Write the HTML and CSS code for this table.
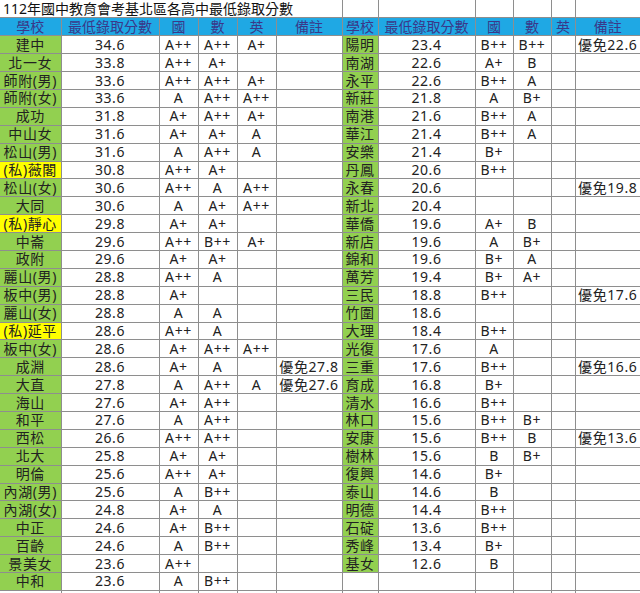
FILE: index.html
```html
<!DOCTYPE html>
<html lang="zh-Hant">
<head>
<meta charset="utf-8">
<title>112年國中教育會考基北區各高中最低錄取分數</title>
<link rel="stylesheet" href="styles.css">
</head>
<body>
<table class="sheet">
<colgroup>
<col class="c-sch"><col class="c-score"><col class="c-g"><col class="c-g"><col class="c-g"><col class="c-note">
<col class="c-sch2"><col class="c-score2"><col class="c-g2"><col class="c-g2"><col class="c-en2"><col class="c-note2">
</colgroup>
<tr class="title-row"><td class="title" colspan="6">112年國中教育會考基北區各高中最低錄取分數</td><td></td><td></td><td></td><td></td><td></td><td></td></tr>
<tr class="head"><td>學校</td><td>最低錄取分數</td><td>國</td><td>數</td><td>英</td><td>備註</td><td>學校</td><td>最低錄取分數</td><td>國</td><td>數</td><td>英</td><td>備註</td></tr>
<tr><td class="sch">建中</td><td>34.6</td><td>A++</td><td>A++</td><td>A+</td><td></td><td class="sch">陽明</td><td>23.4</td><td>B++</td><td>B++</td><td></td><td>優免22.6</td></tr>
<tr><td class="sch">北一女</td><td>33.8</td><td>A++</td><td>A+</td><td></td><td></td><td class="sch">南湖</td><td>22.6</td><td>A+</td><td>B</td><td></td><td></td></tr>
<tr><td class="sch">師附(男)</td><td>33.6</td><td>A++</td><td>A++</td><td>A+</td><td></td><td class="sch">永平</td><td>22.6</td><td>B++</td><td>A</td><td></td><td></td></tr>
<tr><td class="sch">師附(女)</td><td>33.6</td><td>A</td><td>A++</td><td>A++</td><td></td><td class="sch">新莊</td><td>21.8</td><td>A</td><td>B+</td><td></td><td></td></tr>
<tr><td class="sch">成功</td><td>31.8</td><td>A+</td><td>A++</td><td>A+</td><td></td><td class="sch">南港</td><td>21.6</td><td>B++</td><td>A</td><td></td><td></td></tr>
<tr><td class="sch">中山女</td><td>31.6</td><td>A+</td><td>A+</td><td>A</td><td></td><td class="sch">華江</td><td>21.4</td><td>B++</td><td>A</td><td></td><td></td></tr>
<tr><td class="sch">松山(男)</td><td>31.6</td><td>A</td><td>A++</td><td>A</td><td></td><td class="sch">安樂</td><td>21.4</td><td>B+</td><td></td><td></td><td></td></tr>
<tr><td class="sch priv">(私)薇閣</td><td>30.8</td><td>A++</td><td>A+</td><td></td><td></td><td class="sch">丹鳳</td><td>20.6</td><td>B++</td><td></td><td></td><td></td></tr>
<tr><td class="sch">松山(女)</td><td>30.6</td><td>A++</td><td>A</td><td>A++</td><td></td><td class="sch">永春</td><td>20.6</td><td></td><td></td><td></td><td>優免19.8</td></tr>
<tr><td class="sch">大同</td><td>30.6</td><td>A</td><td>A+</td><td>A++</td><td></td><td class="sch">新北</td><td>20.4</td><td></td><td></td><td></td><td></td></tr>
<tr><td class="sch priv">(私)靜心</td><td>29.8</td><td>A+</td><td>A+</td><td></td><td></td><td class="sch">華僑</td><td>19.6</td><td>A+</td><td>B</td><td></td><td></td></tr>
<tr><td class="sch">中崙</td><td>29.6</td><td>A++</td><td>B++</td><td>A+</td><td></td><td class="sch">新店</td><td>19.6</td><td>A</td><td>B+</td><td></td><td></td></tr>
<tr><td class="sch">政附</td><td>29.6</td><td>A+</td><td>A+</td><td></td><td></td><td class="sch">錦和</td><td>19.6</td><td>B+</td><td>A</td><td></td><td></td></tr>
<tr><td class="sch">麗山(男)</td><td>28.8</td><td>A++</td><td>A</td><td></td><td></td><td class="sch">萬芳</td><td>19.4</td><td>B+</td><td>A+</td><td></td><td></td></tr>
<tr><td class="sch">板中(男)</td><td>28.8</td><td>A+</td><td></td><td></td><td></td><td class="sch">三民</td><td>18.8</td><td>B++</td><td></td><td></td><td>優免17.6</td></tr>
<tr><td class="sch">麗山(女)</td><td>28.8</td><td>A</td><td>A</td><td></td><td></td><td class="sch">竹圍</td><td>18.6</td><td></td><td></td><td></td><td></td></tr>
<tr><td class="sch priv">(私)延平</td><td>28.6</td><td>A++</td><td>A</td><td></td><td></td><td class="sch">大理</td><td>18.4</td><td>B++</td><td></td><td></td><td></td></tr>
<tr><td class="sch">板中(女)</td><td>28.6</td><td>A+</td><td>A++</td><td>A++</td><td></td><td class="sch">光復</td><td>17.6</td><td>A</td><td></td><td></td><td></td></tr>
<tr><td class="sch">成淵</td><td>28.6</td><td>A+</td><td>A</td><td></td><td>優免27.8</td><td class="sch">三重</td><td>17.6</td><td>B++</td><td></td><td></td><td>優免16.6</td></tr>
<tr><td class="sch">大直</td><td>27.8</td><td>A</td><td>A++</td><td>A</td><td>優免27.6</td><td class="sch">育成</td><td>16.8</td><td>B+</td><td></td><td></td><td></td></tr>
<tr><td class="sch">海山</td><td>27.6</td><td>A+</td><td>A++</td><td></td><td></td><td class="sch">清水</td><td>16.6</td><td>B++</td><td></td><td></td><td></td></tr>
<tr><td class="sch">和平</td><td>27.6</td><td>A</td><td>A++</td><td></td><td></td><td class="sch">林口</td><td>15.6</td><td>B++</td><td>B+</td><td></td><td></td></tr>
<tr><td class="sch">西松</td><td>26.6</td><td>A++</td><td>A++</td><td></td><td></td><td class="sch">安康</td><td>15.6</td><td>B++</td><td>B</td><td></td><td>優免13.6</td></tr>
<tr><td class="sch">北大</td><td>25.8</td><td>A+</td><td>A+</td><td></td><td></td><td class="sch">樹林</td><td>15.6</td><td>B</td><td>B+</td><td></td><td></td></tr>
<tr><td class="sch">明倫</td><td>25.6</td><td>A++</td><td>A+</td><td></td><td></td><td class="sch">復興</td><td>14.6</td><td>B+</td><td></td><td></td><td></td></tr>
<tr><td class="sch">內湖(男)</td><td>25.6</td><td>A</td><td>B++</td><td></td><td></td><td class="sch">泰山</td><td>14.6</td><td>B</td><td></td><td></td><td></td></tr>
<tr><td class="sch">內湖(女)</td><td>24.8</td><td>A+</td><td>A</td><td></td><td></td><td class="sch">明德</td><td>14.4</td><td>B++</td><td></td><td></td><td></td></tr>
<tr><td class="sch">中正</td><td>24.6</td><td>A+</td><td>B++</td><td></td><td></td><td class="sch">石碇</td><td>13.6</td><td>B++</td><td></td><td></td><td></td></tr>
<tr><td class="sch">百齡</td><td>24.6</td><td>A</td><td>B++</td><td></td><td></td><td class="sch">秀峰</td><td>13.4</td><td>B+</td><td></td><td></td><td></td></tr>
<tr><td class="sch">景美女</td><td>23.6</td><td>A++</td><td></td><td></td><td></td><td class="sch">基女</td><td>12.6</td><td>B</td><td></td><td></td><td></td></tr>
<tr><td class="sch">中和</td><td>23.6</td><td>A</td><td>B++</td><td></td><td></td><td></td><td></td><td></td><td></td><td></td><td></td></tr>
<tr><td></td><td></td><td></td><td></td><td></td><td></td><td></td><td></td><td></td><td></td><td></td><td></td></tr>
</table>
</body>
</html>
```

FILE: styles.css
```css
html, body {
  margin: 0;
  padding: 0;
  background: #ffffff;
}

body {
  width: 640px;
  height: 593px;
  overflow: hidden;
  font-family: "Noto Sans", "Noto Sans CJK TC", sans-serif;
  font-size: 14px;
  color: #222222;
}

.sheet {
  border-collapse: collapse;
  table-layout: fixed;
  width: 640px;
}

.c-sch { width: 61px; }
.c-score { width: 98px; }
.c-g { width: 39px; }
.c-note { width: 66px; }
.c-sch2 { width: 36px; }
.c-score2 { width: 97px; }
.c-g2 { width: 38px; }
.c-en2 { width: 24px; }
.c-note2 { width: 65px; }

.sheet tr {
  height: 17.9px;
}

.sheet td {
  padding: 0;
  border: 1px solid #8e8e8e;
  text-align: center;
  vertical-align: middle;
  line-height: 16px;
  white-space: nowrap;
  overflow: hidden;
  letter-spacing: 0.6px;
}

.sheet tr:first-child td {
  border-top: none;
}

.sheet td:first-child {
  border-left: none;
}

.sheet td:last-child {
  border-right: none;
}

.title-row .title {
  text-align: left;
  padding-left: 3px;
  letter-spacing: 0;
  color: #111111;
  overflow: visible;
}

.head td {
  background: #1fa8e4;
  color: #3a3889;
  letter-spacing: 0;
}

.sch {
  background: #92d050;
  letter-spacing: 0;
}

.sch.priv {
  background: #ffff00;
}
```
